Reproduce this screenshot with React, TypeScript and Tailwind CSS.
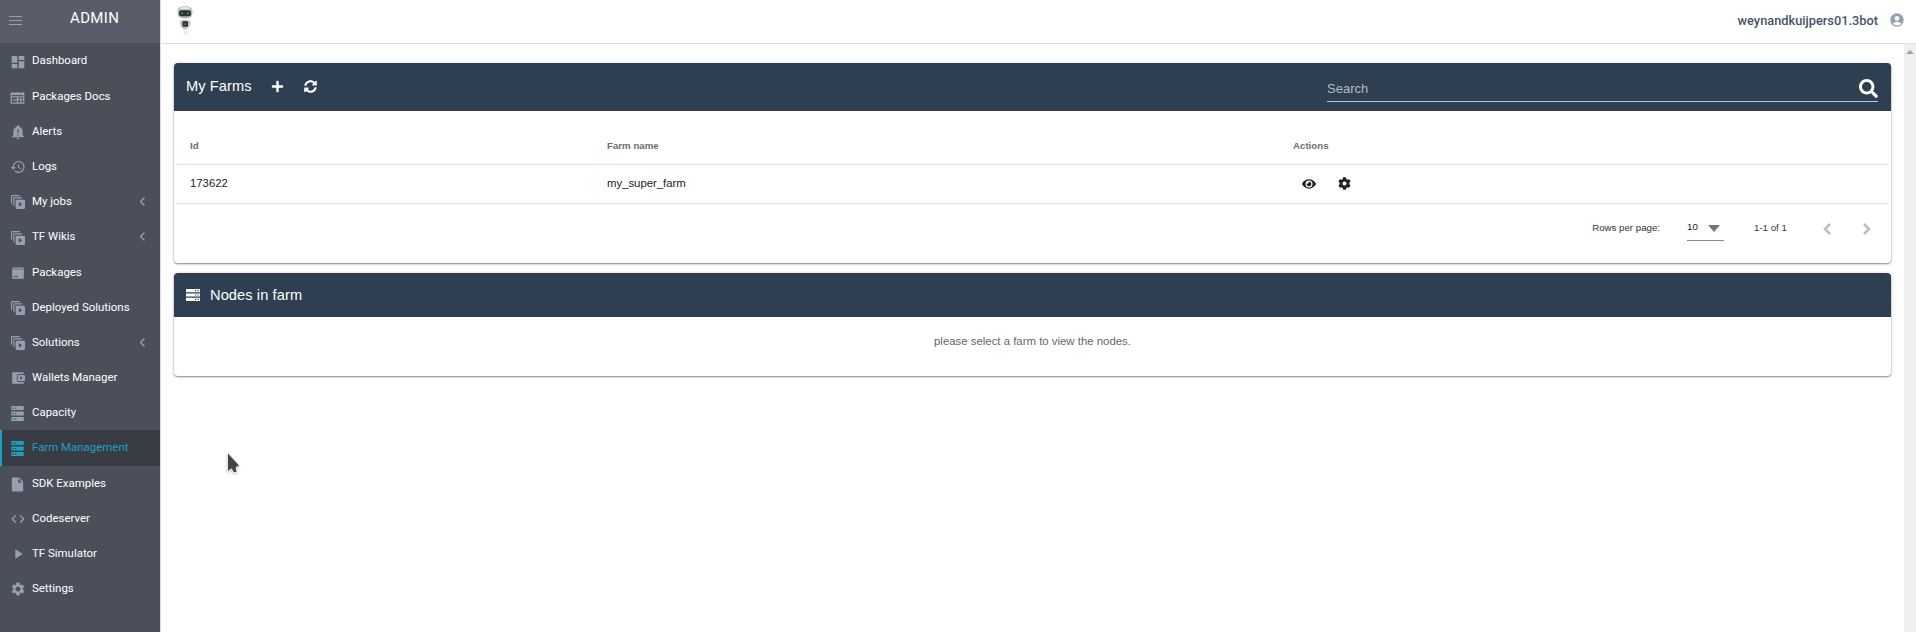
import React from "react";
import { MdHistory, MdCode, MdInsertDriveFile, MdPlayArrow, MdSettings, MdAccountCircle } from "react-icons/md";
import { FaPlus, FaSyncAlt, FaSearch, FaEye, FaCog } from "react-icons/fa";

const Svg = ({ children, size = 14 }: { children: React.ReactNode; size?: number }) => (
  <svg viewBox="0 0 24 24" width={size} height={size} fill="currentColor" fillRule="evenodd">
    {children}
  </svg>
);

const Dashboard = () => <Svg size={16}><path d="M13 3v6h8.500V3M13 21.500h8.500V11H13M2.500 21.500H11V15H2.500M2.500 13H11V3H2.500v10Z" /></Svg>;
const Docs = () => (
  <Svg size={15}><path d="M1 3l1.700 1.700L4.300 3 6 4.700 7.700 3l1.600 1.700L11 3l1.700 1.700L14.300 3 16 4.700 17.700 3l1.600 1.700L21 3l2 1.500V20a2 2 0 0 1-2 2H3a2 2 0 0 1-2-2V3Zm2 9v8h8v-3H5v-2h6v-3H3Zm10 0v2h8v-2h-8Zm0 4v4h3v-4h-3Zm5 0v4h3v-4h-3ZM3 8v2h18V8H3Z" /></Svg>
);
const Alert = () => (
  <Svg size={16}><path d="M10 21h4a2 2 0 0 1-4 0m11-2v1H3v-1l2-2v-6c0-3.100 2-5.800 5-6.700V4a2 2 0 0 1 4 0v.300c3 .900 5 3.600 5 6.700v6l2 2m-8-4h-2v2h2v-2m0-7h-2v5h2V8Z" /></Svg>
);
const Multi = () => (
  <Svg><path d="M1.500 15H0V2a2 2 0 0 1 2-2h13v2H2v13h-.500Z" /><path d="M6 19H4V6a2 2 0 0 1 2-2h13v2H6v13Z" /><path d="M10 8h12a2 2 0 0 1 2 2v12a2 2 0 0 1-2 2H10a2 2 0 0 1-2-2V10a2 2 0 0 1 2-2Zm3.500 4v8l6-4-6-4Z" /></Svg>
);
const Package = () => (
  <Svg><path d="M4 2h16a2 2 0 0 1 2 2v2H2V4a2 2 0 0 1 2-2Z" opacity=".75" /><path d="M2 6h20v15a1 1 0 0 1-1 1H3a1 1 0 0 1-1-1V6Zm3 11v2h7v-2H5Z" /></Svg>
);
const Wallet = () => (
  <Svg><path d="M4 2h16a2 2 0 0 1 2 2v1h-9a3 3 0 0 0-3 3v8a3 3 0 0 0 3 3h9v1a2 2 0 0 1-2 2H4a2 2 0 0 1-2-2V4a2 2 0 0 1 2-2Z" /><path d="M12.500 7h10.500a1 1 0 0 1 1 1v8a1 1 0 0 1-1 1H12.500a1 1 0 0 1-1-1V8a1 1 0 0 1 1-1Zm3 3v4h3.500v-4h-3.500Z" /></Svg>
);
const Server = () => (
  <Svg size={15}><path d="M3 0h18a1 1 0 0 1 1 1v4.500a1 1 0 0 1-1 1H3a1 1 0 0 1-1-1V1a1 1 0 0 1 1-1Zm0 8.700h18a1 1 0 0 1 1 1v4.600a1 1 0 0 1-1 1H3a1 1 0 0 1-1-1V9.700a1 1 0 0 1 1-1ZM3 17.500h18a1 1 0 0 1 1 1V23a1 1 0 0 1-1 1H3a1 1 0 0 1-1-1v-4.500a1 1 0 0 1 1-1ZM4 2.200v2h2v-2H4Zm4 0v2h2v-2H8ZM4 11v2h2v-2H4Zm4 0v2h2v-2H8Zm-4 8.700v2h2v-2H4Zm4 0v2h2v-2H8Z" /></Svg>
);

const items: { label: string; icon: React.ReactNode; sub?: boolean; active?: boolean; tall?: boolean }[] = [
  { label: "Dashboard", icon: <Dashboard />, tall: true },
  { label: "Packages Docs", icon: <Docs /> },
  { label: "Alerts", icon: <Alert /> },
  { label: "Logs", icon: <MdHistory size={16} /> },
  { label: "My jobs", icon: <Multi />, sub: true },
  { label: "TF Wikis", icon: <Multi />, sub: true, tall: true },
  { label: "Packages", icon: <Package /> },
  { label: "Deployed Solutions", icon: <Multi /> },
  { label: "Solutions", icon: <Multi />, sub: true },
  { label: "Wallets Manager", icon: <Wallet /> },
  { label: "Capacity", icon: <Server /> },
  { label: "Farm Management", icon: <Server />, active: true, tall: true },
  { label: "SDK Examples", icon: <MdInsertDriveFile size={17} /> },
  { label: "Codeserver", icon: <MdCode size={16} /> },
  { label: "TF Simulator", icon: <MdPlayArrow size={16} /> },
  { label: "Settings", icon: <MdSettings size={16} /> },
];

const Robot = () => (
  <svg width="18" height="30" viewBox="0 0 18 30">
    <path d="M3 1.500Q9-1.500 15 1.500Q18 6 15 11Q9 14 3 11Q0 6 3 1.500Z" fill="#b8b8b8" />
    <path d="M4.500 1.500Q9-.700 13.500 1.500L14 3.500H4Z" fill="#e4e4e4" />
    <rect x="3" y="4.200" width="12" height="6" rx="2.500" fill="#2c2f2f" />
    <rect x="4.800" y="6.300" width="2.400" height="2" fill="#47777a" />
    <rect x="10.800" y="6.300" width="2.400" height="2" fill="#47777a" />
    <path d="M4 15Q9 12 14.500 15Q15.500 21 9.500 24Q3 21.500 4 15Z" fill="#c6c6c6" />
    <rect x="6.500" y="15.300" width="5.500" height="5.500" rx="1" fill="#2c2f2f" />
    <rect x="8.300" y="17.200" width="2" height="2" fill="#47777a" />
    <path d="M7.500 25h1.500v3H7.500zM10 25h1.300v3H10z" fill="#c6e7f3" />
  </svg>
);

const card = "rounded-[4px] bg-white shadow-[0_1px_2px_rgba(0,0,0,0.45),0_0_3px_rgba(0,0,0,0.12)]";

export default function App() {
  return (
    <div className="flex h-[632px] w-[1916px] overflow-hidden bg-white font-['Liberation_Sans',sans-serif]">
      <aside className="flex w-[160px] shrink-0 flex-col bg-[#4b4f5a] font-['Roboto',sans-serif] text-white">
        <div className="flex h-[43px] shrink-0 items-start bg-[#595d69]">
          <div className="ml-[9px] mt-[16px] flex w-[13px] flex-col gap-[3px]">
            <i className="h-px bg-[#94a1b3]" /><i className="h-px bg-[#94a1b3]" /><i className="h-px bg-[#94a1b3]" />
          </div>
          <span className="ml-[48px] mt-[8px] text-[15px] leading-[20px] tracking-[0.35px]">ADMIN</span>
        </div>
        {items.map((it) => (
          <div
            key={it.label}
            className={`flex shrink-0 items-center ${it.tall ? "h-[36px]" : "h-[35px]"} ${it.active ? "border-l-2 border-[#1ca1c1] bg-[#393c45] pl-[7px] text-[#1ca1c1]" : "pl-[9px]"}`}
          >
            <span className={`mt-[1px] flex w-[17px] shrink-0 justify-center ${it.active ? "" : "text-[#94a1b3]"}`}>{it.icon}</span>
            <span className="-mt-[2px] ml-[6px] whitespace-nowrap text-[11.45px] leading-[20px]">{it.label}</span>
            {it.sub && (
              <svg className="-mt-[1px] ml-auto mr-[15px] text-[#94a1b3]" width="5" height="9" viewBox="0 0 5 9" fill="none" stroke="currentColor" strokeWidth="1.300"><path d="M4.500.500l-4 4 4 4" /></svg>
            )}
          </div>
        ))}
      </aside>

      <div className="flex min-w-0 flex-1 flex-col border-l border-[#dadee0]">
        <header className="flex h-[44px] shrink-0 items-center border-b border-[#dadee0] pl-[15px] pr-[11px]">
          <span className="-mt-[2px]"><Robot /></span>
          <span className="ml-auto mr-[11px] mt-[-2px] font-['Roboto',sans-serif] text-[12.8px] font-medium leading-[20px] text-[#475466]">weynandkuijpers01.3bot</span>
          <MdAccountCircle size={16} className="-mt-[4px] text-[#94a1b3]" />
        </header>

        <div className="flex min-h-0 flex-1">
          <main className="flex flex-1 flex-col gap-[10px] pl-[13px] pr-[13px] pt-[19px] text-[#222]">
            <section className={`h-[200px] ${card}`}>
              <div className="flex h-[48px] items-start rounded-t-[4px] bg-[#2d3f50] pl-[12px] pr-[13px] text-white">
                <span className="mt-[13px] w-[66px] whitespace-nowrap text-[14.6px] leading-[20px] tracking-[0.1px]">My Farms</span>
                <FaPlus size={13} className="ml-[19px] mt-[17px]" />
                <FaSyncAlt size={13} className="ml-[20px] mt-[17px]" />
                <div className="ml-auto flex h-[39px] w-[551px] items-start justify-between border-b border-[#b9c8cf]">
                  <span className="mt-[16px] text-[13px] leading-[20px] text-[#b3bcc4]">Search</span>
                  <FaSearch size={19} className="mt-[16px]" />
                </div>
              </div>
              <div className="mx-[3px]">
                <div className="grid h-[54px] grid-cols-[417px_686px_1fr] items-center border-b border-[#dfdfdf] px-[13px] pt-[18px] text-[9.7px] font-bold text-[#6d6d6d]">
                  <span>Id</span><span>Farm name</span><span>Actions</span>
                </div>
                <div className="grid h-[39px] grid-cols-[417px_686px_1fr] items-center border-b border-[#dfdfdf] px-[13px] pb-[1px] text-[11.35px]">
                  <span>173622</span><span>my_super_farm</span>
                  <span className="flex items-center gap-[22px] pl-[9px]"><FaEye size={14} /><FaCog size={13} /></span>
                </div>
                <div className="flex h-[49px] items-center text-[9.7px]">
                  <span className="ml-auto text-[#333]">Rows per page:</span>
                  <div className="ml-[27px] flex h-[25px] w-[37px] items-center justify-between border-b border-[#8c8c8c] pr-[4px]">
                    <span className="-mt-[1px]">10</span>
                    <svg width="12" height="7" viewBox="0 0 12 7" fill="#757575"><path d="M0 0h12L6 7Z" /></svg>
                  </div>
                  <span className="ml-[30px] w-[33px] whitespace-nowrap text-[#333]">1-1 of 1</span>
                  <svg className="ml-[36px]" width="8" height="12" viewBox="0 0 8 12" fill="none" stroke="#bdbdbd" strokeWidth="2.600"><path d="M7 1L2 6l5 5" /></svg>
                  <svg className="ml-[32px] mr-[17px]" width="8" height="12" viewBox="0 0 8 12" fill="none" stroke="#bdbdbd" strokeWidth="2.600"><path d="M1 1l5 5-5 5" /></svg>
                </div>
              </div>
            </section>

            <section className={`h-[103px] ${card}`}>
              <div className="flex h-[44px] items-center rounded-t-[4px] bg-[#2d3f50] pl-[12px] text-white">
                <svg width="14" height="12" viewBox="0 0 14 12">
                  <path fill="#fff" d="M0 0h14v3.200H0zM0 4.400h14v3.200H0zM0 8.800h14V12H0z" />
                  <path fill="#2d3f50" d="M9 1h1.200v1.200H9zM11.500 1h1.200v1.200h-1.200zM9 5.400h1.200v1.200H9zM11.500 5.400h1.200v1.200h-1.200zM9 9.800h1.200V11H9zM11.500 9.800h1.200V11h-1.200z" />
                </svg>
                <span className="ml-[10px] text-[14.6px] leading-[20px] tracking-[0.1px]">Nodes in farm</span>
              </div>
              <p className="mt-[14px] text-center text-[11.4px] leading-[20px] text-[#666]">please select a farm to view the nodes.</p>
            </section>

            <svg className="absolute left-[226px] top-[450px] drop-shadow-[0_1px_1px_rgba(0,0,0,0.25)]" width="16" height="26" viewBox="0 0 16 26">
              <path d="M1.500 2.500L13.500 15.500 10 17.500 11.200 22.500 7.500 22.500 5.500 18.800 1.500 21.500Z" fill="#444" stroke="#fff" strokeWidth=".800" />
            </svg>
          </main>
          <div className="flex w-[12px] shrink-0 justify-center bg-[#f0f0f0] pt-[6px]">
            <svg width="8" height="4" viewBox="0 0 8 4" fill="#a0a0a0"><path d="M4 0L8 4H0Z" /></svg>
          </div>
        </div>
      </div>
    </div>
  );
}
